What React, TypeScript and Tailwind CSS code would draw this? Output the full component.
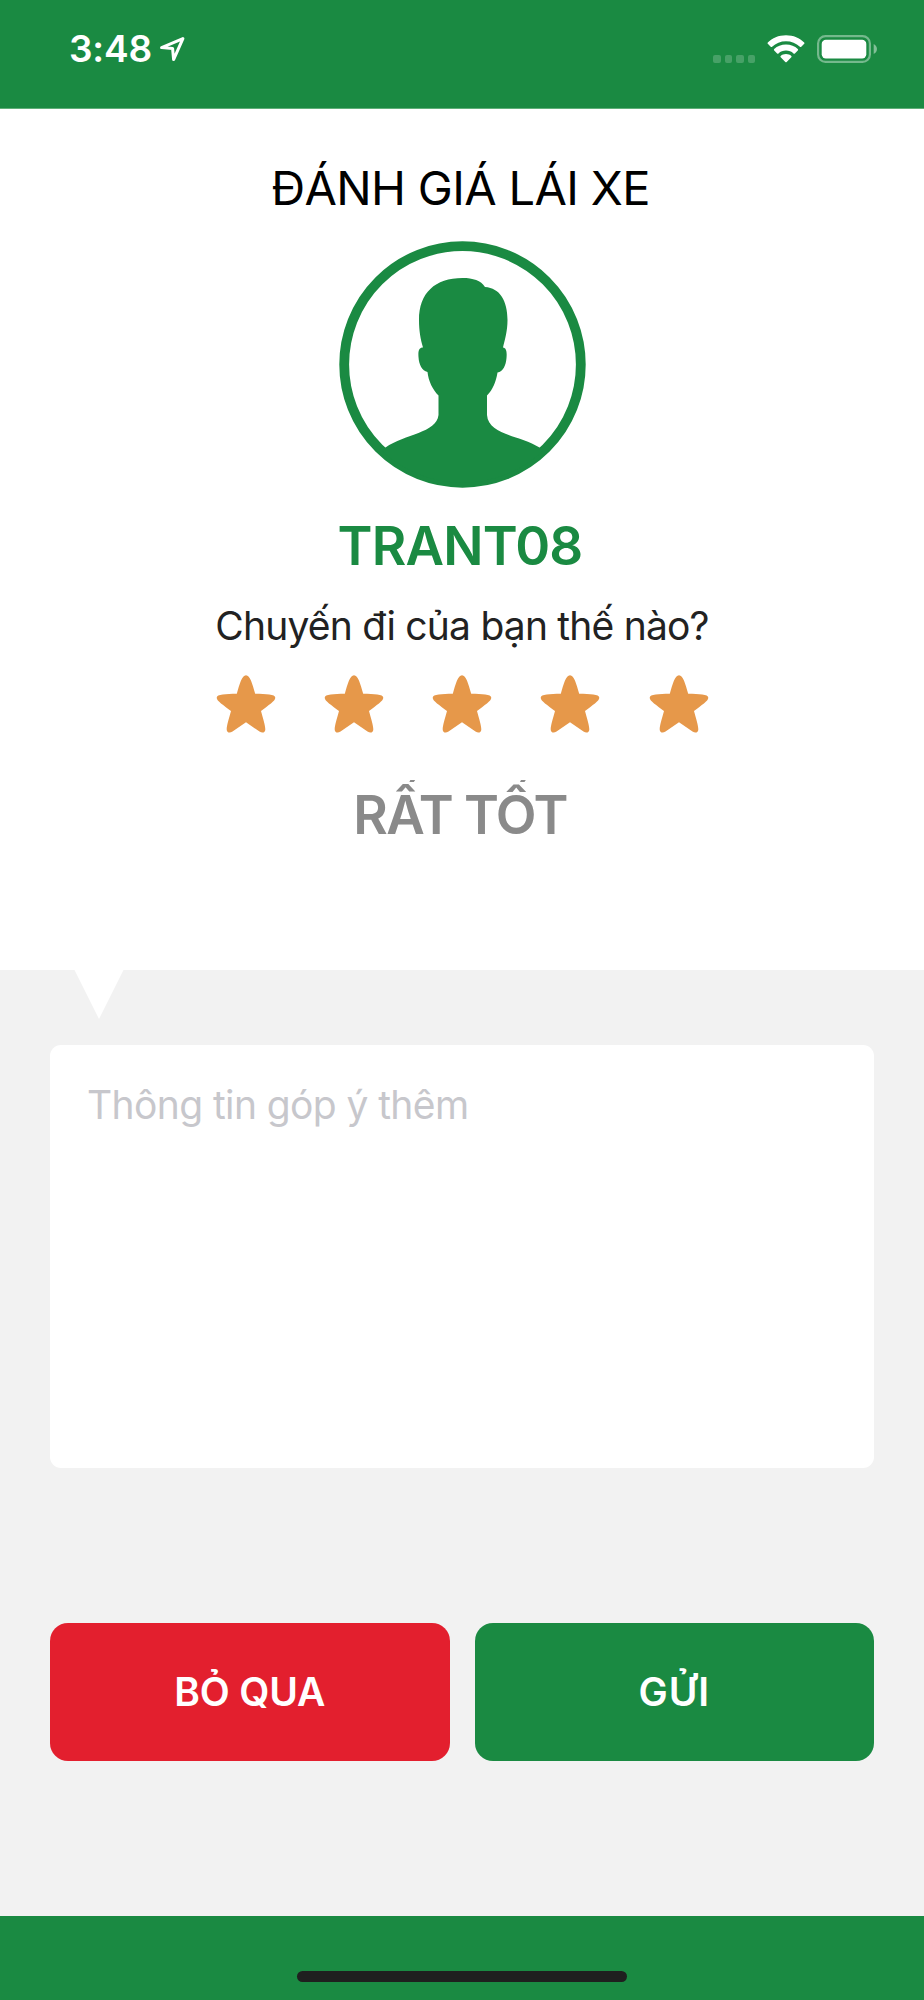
import React, { useState } from "react";

const STARS = [1, 2, 3, 4, 5];
const RATING_LABELS = ["", "RẤT TỆ", "TỆ", "BÌNH THƯỜNG", "TỐT", "RẤT TỐT"];

function StatusBar() {
  return (
    <header className="flex h-[109px] items-start justify-between border-b border-[#5faf78] bg-[#1a8a42] pl-[69px] pr-[46px] pt-[31px] text-white">
      <div className="flex h-9 items-center">
        <span className="w-[90px] whitespace-nowrap text-[37px] font-[560] leading-9 tracking-[-0.2px]">3:48</span>
        <svg className="h-9 w-7" viewBox="0 0 28 36" fill="none" stroke="currentColor" strokeWidth="3" strokeLinejoin="round">
          <path d="M23.9 7.6 L2.6 16.6 L13.6 17.5 L14.6 28.6 Z" />
        </svg>
      </div>

      <div className="flex h-9 items-center">
        <div className="mt-5 flex gap-1">
          {[0, 1, 2, 3].map((i) => (
            <span key={i} className="h-[7.5px] w-[7.5px] rounded-[2px] bg-white/20" />
          ))}
        </div>
        <svg className="ml-3 h-[28px] w-[38px]" viewBox="0 0 38 28" fill="currentColor">
          <path d="M19 0.2 C26.4 0.2 32.8 3 37.2 7.4 Q37.9 8.1 37.2 8.8 L34.3 11.7 Q33.6 12.4 32.9 11.7 C29.2 8.2 24.4 6.2 19 6.2 C13.6 6.2 8.8 8.2 5.1 11.7 Q4.4 12.4 3.7 11.7 L0.8 8.8 Q0.1 8.1 0.8 7.4 C5.2 3 11.6 0.2 19 0.2 Z" />
          <path d="M19 9.6 C23.7 9.6 27.8 11.3 30.8 14.1 Q31.5 14.8 30.8 15.5 L27.9 18.4 Q27.2 19 26.5 18.4 C24.5 16.6 21.9 15.6 19 15.6 C16.1 15.6 13.5 16.6 11.5 18.4 Q10.8 19 10.1 18.4 L7.2 15.5 Q6.5 14.8 7.2 14.1 C10.2 11.3 14.3 9.6 19 9.6 Z" />
          <path d="M19 19 C21.1 19 23 19.7 24.3 20.9 Q25 21.6 24.3 22.3 L19.7 27 Q19 27.6 18.3 27 L13.7 22.3 Q13 21.6 13.7 20.9 C15 19.7 16.9 19 19 19 Z" />
        </svg>
        <svg className="ml-[12px] h-[28px] w-[61px]" viewBox="0 0 61 28" fill="currentColor">
          <rect x="1.1" y="1.1" width="51.8" height="25.8" rx="7.4" fill="none" stroke="currentColor" strokeWidth="2.2" opacity="0.4" />
          <rect x="4.7" y="4.7" width="44.6" height="18.8" rx="4.2" />
          <path d="M56.7 9 C61 11 61 17 56.7 19 Z" opacity="0.45" />
        </svg>
      </div>
    </header>
  );
}

function Avatar() {
  return (
    <svg className="mt-[23px] h-[247px] w-[247px]" viewBox="0 0 247 247">
      <circle cx="123.5" cy="123.5" r="118.3" fill="#fff" stroke="#1a8a42" strokeWidth="9.8" />
      <path
        fill="#1a8a42"
        d="M123.500 37 C134 37 142 39.500 146 46 C161 47 168.500 60 168.500 79 C168.500 90 166 98 164 106.500 C167.500 107 168 111 167.500 117 C167 124 164 131 158.500 131.500 C157 141 153.500 149 148 154.500 L148 174 C149.500 194 180 194 200.500 206.500 L204 210 A118 118 0 0 1 43 210 L46.500 206.500 C66 193 97.500 192 99.500 174 L99.500 154.500 C93.500 148.500 89.500 140 88.500 131 C83 129.500 80 124 79.500 116 C79 110 80 106.500 84 106.500 C81.500 98 80 90 80 79 C80 52 96 37 123.500 37 Z"
      />
    </svg>
  );
}

interface StarProps {
  active: boolean;
  onClick: () => void;
}

function Star({ active, onClick }: StarProps) {
  return (
    <button type="button" onClick={onClick} className={active ? "text-[#e6984a]" : "text-gray-300"}>
      <svg className="block h-[58px] w-[60px]" viewBox="0 0 60 58" fill="currentColor">
        <path d="M30 0.200 C34 0.200 36.500 9 39.200 18.700 C50 18.900 59.300 19 59.300 22.700 C59.300 26 52.500 30 45 36 C47 43.500 49.300 50.500 49.300 54.500 C49.300 57.500 46.500 58.600 43.500 56.600 L30 47.200 L16.500 56.600 C13.500 58.600 10.700 57.500 10.700 54.500 C10.700 50.500 13 43.500 15 36 C7.500 30 0.700 26 0.700 22.700 C0.700 19 10 18.900 20.800 18.700 C23.500 9 26 0.200 30 0.200 Z" />
      </svg>
    </button>
  );
}

export default function App() {
  const [rating, setRating] = useState(5);
  const [comment, setComment] = useState("");

  return (
    <div className="flex h-[2000px] w-[924px] flex-col overflow-hidden bg-[#f2f2f2] font-['Inter',sans-serif]">
      <StatusBar />

      <section className="flex h-[861px] flex-col items-center bg-white">
        <h1 className="mt-[49px] whitespace-nowrap pr-[3px] text-[47px] leading-[60px] tracking-[-0.65px] text-black">ĐÁNH GIÁ LÁI XE</h1>
        <Avatar />
        <h2 className="mt-7 whitespace-nowrap pr-1 text-[53px] font-[560] leading-[60px] tracking-[-0.8px] text-[#1a8a42]">TRANT08</h2>
        <p className="mt-[25px] whitespace-nowrap text-[39px] leading-[50px] tracking-[-0.8px] text-[#222]">Chuyến đi của bạn thế nào?</p>
        <div className="mt-6 flex gap-[48.25px]">
          {STARS.map((n) => (
            <Star key={n} active={n <= rating} onClick={() => setRating(n)} />
          ))}
        </div>
        <p className="mt-[47px] overflow-hidden whitespace-nowrap pr-1 text-[53px] font-[560] leading-[70px] tracking-[-1.5px] text-[#8a8a8a]">
          {RATING_LABELS[rating]}
        </p>
      </section>

      <section className="flex flex-1 flex-col px-[50px]">
        {/* Pointer under the rating block */}
        <svg className="ml-6 h-[49px] w-[50px] shrink-0" viewBox="0 0 50 49">
          <path d="M0.500 0 H49.500 L25 49 Z" fill="#fff" />
        </svg>
        <textarea
          value={comment}
          onChange={(e) => setComment(e.target.value)}
          placeholder="Thông tin góp ý thêm"
          className="mt-[26px] block h-[423px] shrink-0 resize-none rounded-[11px] bg-white px-[37px] pt-[35px] text-[39px] leading-[50px] tracking-[-0.6px] text-[#222] outline-none placeholder:text-[#c7c7cc]"
        />
        <div className="mt-[155px] grid h-[138px] grid-cols-2 gap-[25px] text-[39px] font-[560] text-white">
          <button type="button" className="rounded-[18px] bg-[#e31f2e] tracking-[-0.2px]">
            BỎ QUA
          </button>
          <button type="button" className="rounded-[18px] bg-[#1a8a42] tracking-[1px]">
            GỬI
          </button>
        </div>
      </section>

      <footer className="flex h-[84px] items-end justify-center bg-[#1a8a42] pb-[18px]">
        <div className="h-[11px] w-[330px] rounded-full bg-[#1f1f1f]" />
      </footer>
    </div>
  );
}
